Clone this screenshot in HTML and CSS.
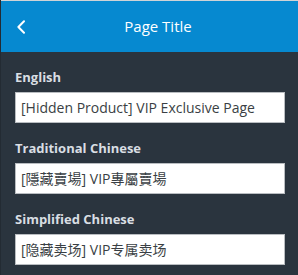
FILE: index.html
```html
<!DOCTYPE html>
<html lang="en">
<head>
<meta charset="utf-8">
<title>Page Title</title>
<link rel="stylesheet" href="styles.css">
</head>
<body>
<div class="app">
  <header class="topbar">
    <a class="back" href="#" aria-label="Back">
      <svg width="10" height="14" viewBox="0 0 10 14"><path d="M8 1.2 L2.4 7 L8 12.8" fill="none" stroke="#fff" stroke-width="2" stroke-linecap="round" stroke-linejoin="round"/></svg>
    </a>
    <h1 class="title">Page Title</h1>
  </header>
  <main class="form">
    <div class="field">
      <label class="label">English</label>
      <div class="input">[Hidden Product] VIP Exclusive Page</div>
    </div>
    <div class="field">
      <label class="label">Traditional Chinese</label>
      <div class="input" lang="zh-TW">[隱藏賣場] VIP專屬賣場</div>
    </div>
    <div class="field">
      <label class="label">Simplified Chinese</label>
      <div class="input" lang="zh-CN">[隐藏卖场] VIP专属卖场</div>
    </div>
  </main>
</div>
</body>
</html>
```

FILE: styles.css
```css
* { box-sizing: border-box; }
html, body { margin: 0; padding: 0; }
body {
  width: 298px;
  height: 275px;
  overflow: hidden;
  background: #2a343e;
  font-family: "Open Sans", "Noto Sans CJK TC", sans-serif;
}
.app {
  height: 275px;
  border-left: 1px solid #232b33;
  background: #2a343e;
}
.topbar {
  position: relative;
  height: 52px;
  border-top: 1px solid #cfd3d6;
  background: #0689d0;
  display: flex;
  align-items: center;
  padding-left: 17px;
}
.back {
  position: absolute;
  left: 15px;
  top: 19px;
  display: block;
  width: 10px;
  height: 14px;
}
.back svg { display: block; }
.title {
  flex: 1;
  margin: 0;
  text-align: center;
  color: #fff;
  font-size: 15px;
  font-weight: 400;
  line-height: 20px;
  padding-bottom: 2px;
}
.form {
  padding: 0 13px 0 14px;
}
.field {
  padding-top: 16px;
}
.label {
  display: block;
  color: #d9dee3;
  font-size: 13px;
  font-weight: 700;
  line-height: 18px;
  margin-bottom: 6px;
}
.input {
  height: 31px;
  background: #fff;
  border: 1px solid #b9bdc1;
  padding: 0 5px;
  color: #3a3f44;
  font-size: 14px;
  line-height: 29px;
  white-space: nowrap;
}
.input:lang(zh-TW) { font-family: "Open Sans", "Noto Sans CJK TC", sans-serif; }
.input:lang(zh-CN) { font-family: "Open Sans", "Noto Sans CJK SC", sans-serif; }
```
